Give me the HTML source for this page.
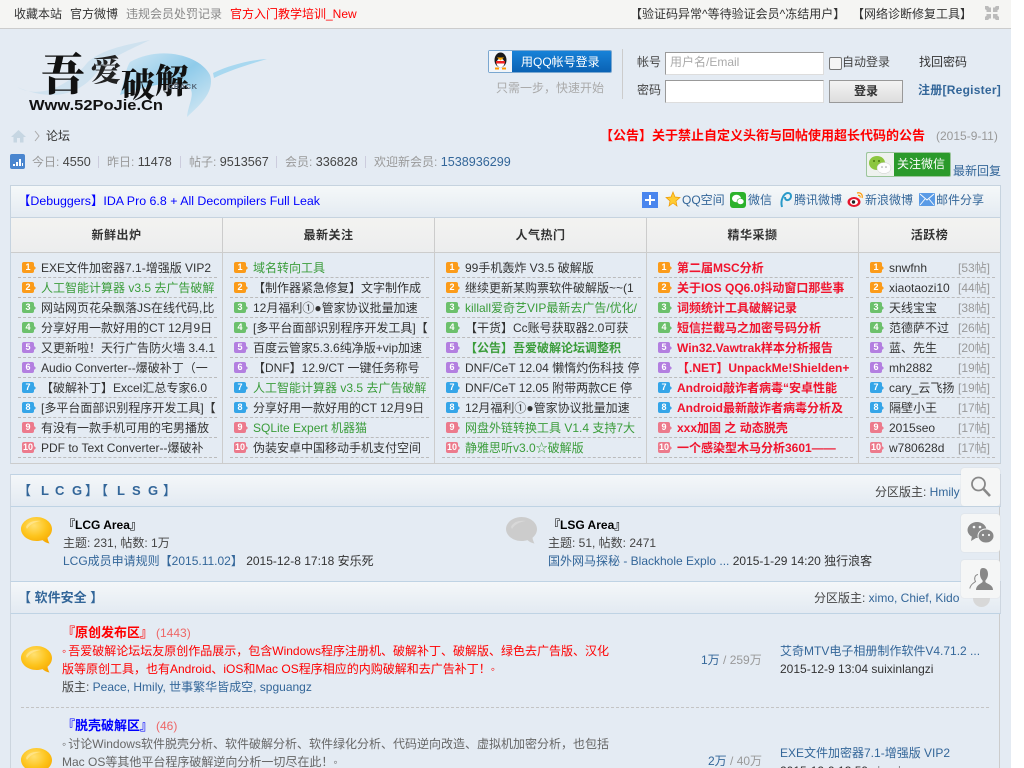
<!DOCTYPE html>
<html lang="zh"><head><meta charset="utf-8"><title>吾爱破解</title>
<style>
html,body{margin:0;padding:0;background:#fff}
#p{position:relative;width:1011px;height:768px;overflow:hidden;background:#e4ebf3;font:12px/18px "Liberation Sans","WenQuanYi Zen Hei","Noto Sans CJK SC",sans-serif;color:#444}
#w{position:absolute;left:0;top:0;width:1024px;height:768px;overflow:hidden;background:#fff}
.a,.t{position:absolute}
.t{white-space:nowrap;line-height:18px}
b{font-weight:bold}
.n{font-size:12.6px}
.l{color:#369}.g{color:#999}.r{color:#f00}.gr{color:#3a9c3a}.rd{color:#f0142d;font-weight:bold}.k{color:#333}
.hd{position:absolute;left:10px;width:989px;background:linear-gradient(#f4f7f9,#e3eaf2);border-top:1px solid #bfd3e4;border-bottom:1px solid #bfd3e4;border-left:1px solid #cdd6e0;border-right:1px solid #cdd6e0}
.ch{position:absolute;top:218px;height:34px;background:linear-gradient(#f3f3f1,#ecedee);text-align:center;font-weight:bold;line-height:34px;color:#333;letter-spacing:.5px}
.v{position:absolute;top:218px;width:1px;height:245px;background:#ccc}
.dot{position:absolute;height:0;border-top:1px dashed #bbb}
.ic{position:absolute;width:12px;height:11px;border-radius:2px;color:#fff;font:bold 9px/11px "Liberation Sans",sans-serif;text-align:center}
.ic:after{content:"";position:absolute;right:-2px;top:4px;border-left:2px solid;border-top:2px solid transparent;border-bottom:2px solid transparent;border-left-color:inherit}
.sh{color:#369;font-weight:bold;font-size:13px}
.o{letter-spacing:2px}
.fb{position:absolute;left:961px;width:39px;height:38px;background:#f5f6f6;border-radius:3px;box-shadow:0 0 1px #ccc}
</style></head><body>
<div id="w"><div id="p">

<!-- top bar -->
<div class="a" style="left:0;top:0;width:1011px;height:28px;background:#f5f5f3;border-bottom:1px solid #ccc"></div>
<span class="t" style="left:14px;top:5px;color:#333">收藏本站</span>
<span class="t" style="left:70px;top:5px;color:#333">官方微博</span>
<span class="t" style="left:126px;top:5px;color:#888">违规会员处罚记录</span>
<span class="t" style="left:230px;top:5px;color:#f00">官方入门教学培训_New</span>
<span class="t" style="left:630px;top:5px;color:#333">【验证码异常^等待验证会员^冻结用户】</span>
<span class="t" style="left:852px;top:5px;color:#333">【网络诊断修复工具】</span>
<svg class="a" style="left:984px;top:5px" width="16" height="16" viewBox="0 0 16 16"><g fill="#bbb"><path d="M1 1h3l2 2 1-1v5H2l1-1-2-2zM15 1h-3l-2 2-1-1v5h5l-1-1 2-2zM1 15h3l2-2 1 1V9H2l1 1-2 2zM15 15h-3l-2-2-1 1V9h5l-1 1 2 2z"/></g></svg>

<!-- logo -->
<svg class="a" style="left:0;top:0" width="280" height="125" viewBox="0 0 280 125">
<defs><linearGradient id="lg" x1="0" y1="0" x2="1" y2="1"><stop offset="0" stop-color="#d4e8f4"/><stop offset=".5" stop-color="#8fcbea"/><stop offset="1" stop-color="#dcebf4"/></linearGradient></defs>
<path d="M17 87C40 100 70 85 87 63 100 50 125 45 150 40 125 52 110 58 100 68 85 90 60 105 17 87z" fill="#cfe2ef"/>
<path d="M130 62C160 45 200 55 210 75 215 92 200 105 187 117 188 105 195 95 190 88 180 78 150 85 120 95 125 80 125 70 130 62z" fill="url(#lg)"/>
<path d="M213 73C230 65 250 60 267 59 250 64 230 70 214 78z" fill="#a8d8f0"/>
<text x="41" y="90" font-family="Noto Serif CJK SC,serif" font-weight="900" font-size="44" fill="#111">吾</text>
<text x="91" y="81" font-family="Noto Serif CJK SC,serif" font-weight="900" font-size="30" fill="#222">爱</text>
<text x="121" y="97" font-family="Noto Serif CJK SC,serif" font-weight="900" font-size="34" fill="#111">破</text>
<text x="155" y="93" font-family="Noto Serif CJK SC,serif" font-weight="900" font-size="34" fill="#111">解</text>
<text x="168" y="89" font-family="Liberation Sans,sans-serif" font-weight="bold" font-size="7.500" textLength="29" fill="#567">CRACK</text>
<text x="29" y="110" font-family="Liberation Sans,sans-serif" font-weight="bold" font-size="15" textLength="134" lengthAdjust="spacingAndGlyphs" fill="#111">Www.52PoJie.Cn</text>
</svg>

<!-- login -->
<div class="a" style="left:488px;top:50px;width:124px;height:23px;background:linear-gradient(#1782d8,#0a62b4);border:1px solid #7aa7d0;border-radius:2px;box-sizing:border-box"></div>
<div class="a" style="left:489px;top:51px;width:23px;height:21px;background:#f1f5f9"></div>
<svg class="a" style="left:492px;top:52px" width="17" height="18" viewBox="0 0 17 18"><ellipse cx="8.500" cy="8" rx="6" ry="7.500" fill="#1a1a1a"/><ellipse cx="8.500" cy="11" rx="4" ry="4.500" fill="#fff"/><path d="M4 9h9v2.500H4z" fill="#e22"/><path d="M5 5.500h7l-3.500 3z" fill="#fa0"/><path d="M3 15.500h4v2H3zM10 15.500h4v2h-4z" fill="#f90"/></svg>
<span class="t" style="left:521px;top:53px;color:#fff">用QQ帐号登录</span>
<span class="t" style="left:496px;top:79px;color:#aaa">只需一步，快速开始</span>
<div class="a" style="left:622px;top:49px;width:1px;height:50px;background:#ccc"></div>
<span class="t" style="left:637px;top:53px">帐号</span>
<span class="t" style="left:637px;top:81px">密码</span>
<div class="a" style="left:665px;top:52px;width:157px;height:21px;background:#fff;border:1px solid;border-color:#999 #ddd #ddd #999"></div>
<span class="t" style="left:670px;top:53px;color:#aaa">用户名/Email</span>
<div class="a" style="left:665px;top:80px;width:157px;height:21px;background:#fff;border:1px solid;border-color:#999 #ddd #ddd #999"></div>
<div class="a" style="left:829px;top:57px;width:11px;height:11px;background:#f5f5f5;border:1px solid #777;border-radius:2px"></div>
<span class="t" style="left:842px;top:53px">自动登录</span>
<span class="t" style="left:919px;top:53px;color:#333">找回密码</span>
<div class="a" style="left:829px;top:80px;width:72px;height:21px;background:linear-gradient(#f4f4f4,#ddd);border:1px solid #999;text-align:center;line-height:21px;font-weight:bold;color:#333">登录</div>
<span class="t" style="left:918px;top:81px;color:#369;font-weight:bold;letter-spacing:.25px">注册[Register]</span>

<!-- breadcrumb -->
<svg class="a" style="left:11px;top:129px" width="15" height="14" viewBox="0 0 15 14"><path d="M7.500 1L0 8h2.500v5.500h3.500V9h3v4.500h3.500V8H15z" fill="#c6d6e2"/></svg>
<svg class="a" style="left:34px;top:130px" width="6" height="12" viewBox="0 0 6 12"><path d="M1 1l4 5-4 5" fill="none" stroke="#aaa"/></svg>
<span class="t" style="left:46px;top:127px;color:#333">论坛</span>
<span class="t" style="left:600px;top:127px;color:#f00;font-weight:bold;font-size:13px">【公告】关于禁止自定义头衔与回帖使用超长代码的公告</span>
<span class="t" style="left:936px;top:127px;color:#999">(2015-9-11)</span>

<!-- stats -->
<svg class="a" style="left:10px;top:154px" width="15" height="15" viewBox="0 0 15 15"><rect width="15" height="15" rx="2" fill="#4a86cf"/><path d="M3 10h2v2H3zM6 8h2v4H6zM9 5h2v7H9zM12 9h1v3h-1z" fill="#fff"/></svg>
<span class="t" style="left:32px;top:153px"><span class="g">今日:</span> <span class="n">4550</span></span>
<span class="t" style="left:107px;top:153px"><span class="g">昨日:</span> <span class="n">11478</span></span>
<span class="t" style="left:189px;top:153px"><span class="g">帖子:</span> <span class="n">9513567</span></span>
<span class="t" style="left:285px;top:153px"><span class="g">会员:</span> <span class="n">336828</span></span>
<span class="t" style="left:374px;top:153px"><span class="g">欢迎新会员:</span> <span class="l n">1538936299</span></span>
<div class="a" style="left:98px;top:156px;width:1px;height:12px;background:#ccd"></div>
<div class="a" style="left:180px;top:156px;width:1px;height:12px;background:#ccd"></div>
<div class="a" style="left:276px;top:156px;width:1px;height:12px;background:#ccd"></div>
<div class="a" style="left:365px;top:156px;width:1px;height:12px;background:#ccd"></div>

<!-- wechat btn -->
<div class="a" style="left:866px;top:152px;width:83px;height:23px;background:#2b9a2b;border:1px solid #9cc59c;border-radius:2px;overflow:hidden"><div class="a" style="left:0;top:0;width:27px;height:23px;background:#eef2ee"></div>
<svg class="a" style="left:1px;top:2px" width="26" height="20" viewBox="0 0 26 20"><ellipse cx="9" cy="8" rx="8" ry="7" fill="#8cc63f"/><ellipse cx="16" cy="13" rx="7" ry="5.500" fill="#fdfdfd" stroke="#ccc" stroke-width=".5"/><circle cx="6" cy="6" r="1" fill="#4a7a10"/><circle cx="11" cy="6" r="1" fill="#4a7a10"/><circle cx="14" cy="12" r=".8" fill="#999"/><circle cx="18" cy="12" r=".8" fill="#999"/></svg></div>
<span class="t" style="left:897px;top:155px;color:#fff">关注微信</span>
<span class="t" style="left:953px;top:162px;color:#369">最新回复</span>

<!-- hot table -->
<div class="a" style="left:10px;top:185px;width:989px;height:277px;border:1px solid #c6d3df;border-bottom-color:#ccc"></div>
<div class="a" style="left:11px;top:186px;width:989px;height:31px;background:linear-gradient(#f5f8f9,#e4ebf2);border-bottom:1px solid #c6d3df"></div>
<span class="t" style="left:18px;top:192px;color:#00f;font-size:12.4px">【Debuggers】IDA Pro 6.8 + All Decompilers Full Leak</span>
<div class="ch" style="left:11px;width:211px">新鲜出炉</div>
<div class="ch" style="left:223px;width:211px">最新关注</div>
<div class="ch" style="left:435px;width:211px">人气热门</div>
<div class="ch" style="left:647px;width:211px">精华采撷</div>
<div class="ch" style="left:859px;width:141px">活跃榜</div>
<div class="a" style="left:11px;top:252px;width:989px;height:1px;background:#ccc"></div>
<div class="v" style="left:222px"></div><div class="v" style="left:434px"></div><div class="v" style="left:646px"></div><div class="v" style="left:858px"></div>

<!-- share -->
<div class="a" style="left:642px;top:192px;width:16px;height:16px;background:#4a86ee"></div>
<svg class="a" style="left:642px;top:192px" width="16" height="16" viewBox="0 0 16 16"><path d="M3 7h4V3h2v4h4v2H9v4H7V9H3z" fill="#fff"/></svg>
<svg class="a" style="left:665px;top:191px" width="16" height="16" viewBox="0 0 16 16"><path d="M8 1l2 5 5 .5-4 3.500 1 5-4-3-4 3 1-5-4-3.500 5-.5z" fill="#fc3" stroke="#e90" stroke-width=".7"/></svg>
<span class="t" style="left:682px;top:191px;color:#369">QQ空间</span>
<div class="a" style="left:730px;top:192px;width:16px;height:16px;background:#2bb22b;border-radius:3px"></div>
<svg class="a" style="left:730px;top:192px" width="16" height="16" viewBox="0 0 16 16"><ellipse cx="6.500" cy="6.500" rx="4.500" ry="3.700" fill="#fff"/><ellipse cx="10.500" cy="9.500" rx="3.500" ry="3" fill="#fff" stroke="#2bb22b" stroke-width=".6"/></svg>
<span class="t" style="left:748px;top:191px;color:#369">微信</span>
<svg class="a" style="left:779px;top:191px" width="14" height="18" viewBox="0 0 14 18"><path d="M3 16C1 9 5 2 9 2c4 0 4 6 0 7-2 .5-3-1-3-3" fill="none" stroke="#2a9ac9" stroke-width="2"/></svg>
<span class="t" style="left:794px;top:191px;color:#369">腾讯微博</span>
<svg class="a" style="left:847px;top:191px" width="17" height="17" viewBox="0 0 17 17"><ellipse cx="7" cy="11" rx="6.500" ry="5" fill="#e6162d"/><ellipse cx="7" cy="11" rx="4" ry="3" fill="#fff"/><circle cx="6.500" cy="11" r="1.700" fill="#222"/><path d="M10 2c4-1 6 2 5 5M11 4.500c2-.5 2.500 1 2 2" fill="none" stroke="#f90" stroke-width="1.200"/></svg>
<span class="t" style="left:865px;top:191px;color:#369">新浪微博</span>
<svg class="a" style="left:919px;top:193px" width="16" height="13" viewBox="0 0 16 13"><rect width="16" height="13" rx="1" fill="#5a9be6"/><path d="M1 1l7 6 7-6M1 12l5-6M15 12l-5-6" fill="none" stroke="#fff" stroke-width=".9"/></svg>
<span class="t" style="left:936px;top:191px;color:#369">邮件分享</span>

<!-- list rows -->
<div id="rows">
<div class="dot" style="left:18px;top:277px;width:199px"></div><div class="dot" style="left:230px;top:277px;width:199px"></div><div class="dot" style="left:442px;top:277px;width:199px"></div><div class="dot" style="left:654px;top:277px;width:199px"></div><div class="dot" style="left:866px;top:277px;width:129px"></div>
<div class="dot" style="left:18px;top:297px;width:199px"></div><div class="dot" style="left:230px;top:297px;width:199px"></div><div class="dot" style="left:442px;top:297px;width:199px"></div><div class="dot" style="left:654px;top:297px;width:199px"></div><div class="dot" style="left:866px;top:297px;width:129px"></div>
<div class="dot" style="left:18px;top:317px;width:199px"></div><div class="dot" style="left:230px;top:317px;width:199px"></div><div class="dot" style="left:442px;top:317px;width:199px"></div><div class="dot" style="left:654px;top:317px;width:199px"></div><div class="dot" style="left:866px;top:317px;width:129px"></div>
<div class="dot" style="left:18px;top:337px;width:199px"></div><div class="dot" style="left:230px;top:337px;width:199px"></div><div class="dot" style="left:442px;top:337px;width:199px"></div><div class="dot" style="left:654px;top:337px;width:199px"></div><div class="dot" style="left:866px;top:337px;width:129px"></div>
<div class="dot" style="left:18px;top:357px;width:199px"></div><div class="dot" style="left:230px;top:357px;width:199px"></div><div class="dot" style="left:442px;top:357px;width:199px"></div><div class="dot" style="left:654px;top:357px;width:199px"></div><div class="dot" style="left:866px;top:357px;width:129px"></div>
<div class="dot" style="left:18px;top:377px;width:199px"></div><div class="dot" style="left:230px;top:377px;width:199px"></div><div class="dot" style="left:442px;top:377px;width:199px"></div><div class="dot" style="left:654px;top:377px;width:199px"></div><div class="dot" style="left:866px;top:377px;width:129px"></div>
<div class="dot" style="left:18px;top:397px;width:199px"></div><div class="dot" style="left:230px;top:397px;width:199px"></div><div class="dot" style="left:442px;top:397px;width:199px"></div><div class="dot" style="left:654px;top:397px;width:199px"></div><div class="dot" style="left:866px;top:397px;width:129px"></div>
<div class="dot" style="left:18px;top:417px;width:199px"></div><div class="dot" style="left:230px;top:417px;width:199px"></div><div class="dot" style="left:442px;top:417px;width:199px"></div><div class="dot" style="left:654px;top:417px;width:199px"></div><div class="dot" style="left:866px;top:417px;width:129px"></div>
<div class="dot" style="left:18px;top:437px;width:199px"></div><div class="dot" style="left:230px;top:437px;width:199px"></div><div class="dot" style="left:442px;top:437px;width:199px"></div><div class="dot" style="left:654px;top:437px;width:199px"></div><div class="dot" style="left:866px;top:437px;width:129px"></div>
<div class="dot" style="left:18px;top:457px;width:199px"></div><div class="dot" style="left:230px;top:457px;width:199px"></div><div class="dot" style="left:442px;top:457px;width:199px"></div><div class="dot" style="left:654px;top:457px;width:199px"></div><div class="dot" style="left:866px;top:457px;width:129px"></div>
</div>

<!-- icons -->
<div class="ic" style="left:22px;top:262px;background:#fb9b1a;border-color:#fb9b1a">1</div><div class="ic" style="left:22px;top:282px;background:#fb9b1a;border-color:#fb9b1a">2</div><div class="ic" style="left:22px;top:302px;background:#6cc06c;border-color:#6cc06c">3</div><div class="ic" style="left:22px;top:322px;background:#6cc06c;border-color:#6cc06c">4</div><div class="ic" style="left:22px;top:342px;background:#b37fe0;border-color:#b37fe0">5</div><div class="ic" style="left:22px;top:362px;background:#b37fe0;border-color:#b37fe0">6</div><div class="ic" style="left:22px;top:382px;background:#35a5e8;border-color:#35a5e8">7</div><div class="ic" style="left:22px;top:402px;background:#35a5e8;border-color:#35a5e8">8</div><div class="ic" style="left:22px;top:422px;background:#ec7a8c;border-color:#ec7a8c">9</div><div class="ic" style="left:22px;top:442px;background:#ec7a8c;border-color:#ec7a8c">10</div>
<div class="ic" style="left:234px;top:262px;background:#fb9b1a;border-color:#fb9b1a">1</div><div class="ic" style="left:234px;top:282px;background:#fb9b1a;border-color:#fb9b1a">2</div><div class="ic" style="left:234px;top:302px;background:#6cc06c;border-color:#6cc06c">3</div><div class="ic" style="left:234px;top:322px;background:#6cc06c;border-color:#6cc06c">4</div><div class="ic" style="left:234px;top:342px;background:#b37fe0;border-color:#b37fe0">5</div><div class="ic" style="left:234px;top:362px;background:#b37fe0;border-color:#b37fe0">6</div><div class="ic" style="left:234px;top:382px;background:#35a5e8;border-color:#35a5e8">7</div><div class="ic" style="left:234px;top:402px;background:#35a5e8;border-color:#35a5e8">8</div><div class="ic" style="left:234px;top:422px;background:#ec7a8c;border-color:#ec7a8c">9</div><div class="ic" style="left:234px;top:442px;background:#ec7a8c;border-color:#ec7a8c">10</div>
<div class="ic" style="left:446px;top:262px;background:#fb9b1a;border-color:#fb9b1a">1</div><div class="ic" style="left:446px;top:282px;background:#fb9b1a;border-color:#fb9b1a">2</div><div class="ic" style="left:446px;top:302px;background:#6cc06c;border-color:#6cc06c">3</div><div class="ic" style="left:446px;top:322px;background:#6cc06c;border-color:#6cc06c">4</div><div class="ic" style="left:446px;top:342px;background:#b37fe0;border-color:#b37fe0">5</div><div class="ic" style="left:446px;top:362px;background:#b37fe0;border-color:#b37fe0">6</div><div class="ic" style="left:446px;top:382px;background:#35a5e8;border-color:#35a5e8">7</div><div class="ic" style="left:446px;top:402px;background:#35a5e8;border-color:#35a5e8">8</div><div class="ic" style="left:446px;top:422px;background:#ec7a8c;border-color:#ec7a8c">9</div><div class="ic" style="left:446px;top:442px;background:#ec7a8c;border-color:#ec7a8c">10</div>
<div class="ic" style="left:658px;top:262px;background:#fb9b1a;border-color:#fb9b1a">1</div><div class="ic" style="left:658px;top:282px;background:#fb9b1a;border-color:#fb9b1a">2</div><div class="ic" style="left:658px;top:302px;background:#6cc06c;border-color:#6cc06c">3</div><div class="ic" style="left:658px;top:322px;background:#6cc06c;border-color:#6cc06c">4</div><div class="ic" style="left:658px;top:342px;background:#b37fe0;border-color:#b37fe0">5</div><div class="ic" style="left:658px;top:362px;background:#b37fe0;border-color:#b37fe0">6</div><div class="ic" style="left:658px;top:382px;background:#35a5e8;border-color:#35a5e8">7</div><div class="ic" style="left:658px;top:402px;background:#35a5e8;border-color:#35a5e8">8</div><div class="ic" style="left:658px;top:422px;background:#ec7a8c;border-color:#ec7a8c">9</div><div class="ic" style="left:658px;top:442px;background:#ec7a8c;border-color:#ec7a8c">10</div>
<div class="ic" style="left:870px;top:262px;background:#fb9b1a;border-color:#fb9b1a">1</div><div class="ic" style="left:870px;top:282px;background:#fb9b1a;border-color:#fb9b1a">2</div><div class="ic" style="left:870px;top:302px;background:#6cc06c;border-color:#6cc06c">3</div><div class="ic" style="left:870px;top:322px;background:#6cc06c;border-color:#6cc06c">4</div><div class="ic" style="left:870px;top:342px;background:#b37fe0;border-color:#b37fe0">5</div><div class="ic" style="left:870px;top:362px;background:#b37fe0;border-color:#b37fe0">6</div><div class="ic" style="left:870px;top:382px;background:#35a5e8;border-color:#35a5e8">7</div><div class="ic" style="left:870px;top:402px;background:#35a5e8;border-color:#35a5e8">8</div><div class="ic" style="left:870px;top:422px;background:#ec7a8c;border-color:#ec7a8c">9</div><div class="ic" style="left:870px;top:442px;background:#ec7a8c;border-color:#ec7a8c">10</div>

<!-- col 1 -->
<span class="t k" style="left:41px;top:259px">EXE文件加密器7.1-增强版 VIP2</span>
<span class="t gr" style="left:41px;top:279px">人工智能计算器 v3.5 去广告破解</span>
<span class="t k" style="left:41px;top:299px">网站网页花朵飘落JS在线代码,比</span>
<span class="t k" style="left:41px;top:319px">分享好用一款好用的CT 12月9日</span>
<span class="t k" style="left:41px;top:339px">又更新啦！天行广告防火墙 3.4.1</span>
<span class="t k" style="left:41px;top:359px">Audio Converter--爆破补丁（一</span>
<span class="t k" style="left:41px;top:379px">【破解补丁】Excel汇总专家6.0</span>
<span class="t k" style="left:41px;top:399px">[多平台面部识别程序开发工具]【</span>
<span class="t k" style="left:41px;top:419px">有没有一款手机可用的宅男播放</span>
<span class="t k" style="left:41px;top:439px">PDF to Text Converter--爆破补</span>
<!-- col 2 -->
<span class="t gr" style="left:253px;top:259px">域名转向工具</span>
<span class="t k" style="left:253px;top:279px">【制作器紧急修复】文字制作成</span>
<span class="t k" style="left:253px;top:299px">12月福利①●管家协议批量加速</span>
<span class="t k" style="left:253px;top:319px">[多平台面部识别程序开发工具]【</span>
<span class="t k" style="left:253px;top:339px">百度云管家5.3.6纯净版+vip加速</span>
<span class="t k" style="left:253px;top:359px">【DNF】12.9/CT 一键任务称号</span>
<span class="t gr" style="left:253px;top:379px">人工智能计算器 v3.5 去广告破解</span>
<span class="t k" style="left:253px;top:399px">分享好用一款好用的CT 12月9日</span>
<span class="t gr" style="left:253px;top:419px">SQLite Expert 机器猫</span>
<span class="t k" style="left:253px;top:439px">伪装安卓中国移动手机支付空间</span>
<!-- col 3 -->
<span class="t k" style="left:465px;top:259px">99手机轰炸 V3.5 破解版</span>
<span class="t k" style="left:465px;top:279px">继续更新某购票软件破解版~~(1</span>
<span class="t gr" style="left:465px;top:299px">killall爱奇艺VIP最新去广告/优化/</span>
<span class="t k" style="left:465px;top:319px">【干货】Cc账号获取器2.0可获</span>
<span class="t gr" style="left:465px;top:339px;font-weight:bold">【公告】吾爱破解论坛调整积</span>
<span class="t k" style="left:465px;top:359px">DNF/CeT 12.04 懒惰灼伤科技 停</span>
<span class="t k" style="left:465px;top:379px">DNF/CeT 12.05 附带两款CE 停</span>
<span class="t k" style="left:465px;top:399px">12月福利①●管家协议批量加速</span>
<span class="t gr" style="left:465px;top:419px">网盘外链转换工具 V1.4 支持7大</span>
<span class="t gr" style="left:465px;top:439px">静雅思听v3.0☆破解版</span>
<!-- col 4 -->
<span class="t rd" style="left:677px;top:259px">第二届MSC分析</span>
<span class="t rd" style="left:677px;top:279px">关于IOS QQ6.0抖动窗口那些事</span>
<span class="t rd" style="left:677px;top:299px">词频统计工具破解记录</span>
<span class="t rd" style="left:677px;top:319px">短信拦截马之加密号码分析</span>
<span class="t rd" style="left:677px;top:339px">Win32.Vawtrak样本分析报告</span>
<span class="t rd" style="left:677px;top:359px">【.NET】UnpackMe!Shielden+</span>
<span class="t rd" style="left:677px;top:379px">Android敲诈者病毒“安卓性能</span>
<span class="t rd" style="left:677px;top:399px">Android最新敲诈者病毒分析及</span>
<span class="t rd" style="left:677px;top:419px">xxx加固 之 动态脱壳</span>
<span class="t rd" style="left:677px;top:439px">一个感染型木马分析3601——</span>
<!-- col 5 -->
<span class="t k" style="left:889px;top:259px">snwfnh</span><span class="t g" style="left:958px;top:259px">[53帖]</span>
<span class="t k" style="left:889px;top:279px">xiaotaozi10</span><span class="t g" style="left:958px;top:279px">[44帖]</span>
<span class="t k" style="left:889px;top:299px">天线宝宝</span><span class="t g" style="left:958px;top:299px">[38帖]</span>
<span class="t k" style="left:889px;top:319px">范德萨不过</span><span class="t g" style="left:958px;top:319px">[26帖]</span>
<span class="t k" style="left:889px;top:339px">蓝、先生</span><span class="t g" style="left:958px;top:339px">[20帖]</span>
<span class="t k" style="left:889px;top:359px">mh2882</span><span class="t g" style="left:958px;top:359px">[19帖]</span>
<span class="t k" style="left:889px;top:379px">cary_云飞扬</span><span class="t g" style="left:958px;top:379px">[19帖]</span>
<span class="t k" style="left:889px;top:399px">隔壁小王</span><span class="t g" style="left:958px;top:399px">[17帖]</span>
<span class="t k" style="left:889px;top:419px">2015seo</span><span class="t g" style="left:958px;top:419px">[17帖]</span>
<span class="t k" style="left:889px;top:439px">w780628d</span><span class="t g" style="left:958px;top:439px">[17帖]</span>

<!-- LCG section -->
<div class="a" style="left:10px;top:474px;width:990px;height:294px;border-left:1px solid #ccd5de;border-right:1px solid #ccc;box-sizing:border-box"></div>
<div class="hd" style="top:474px;height:31px"></div>
<span class="t sh" style="left:18px;top:482px">【</span><span class="t sh" style="left:41px;top:482px">L</span><span class="t sh" style="left:55px;top:482px">C</span><span class="t sh" style="left:72px;top:482px">G</span><span class="t sh" style="left:85px;top:482px">】</span><span class="t sh" style="left:95px;top:482px">【</span><span class="t sh" style="left:117px;top:482px">L</span><span class="t sh" style="left:132px;top:482px">S</span><span class="t sh" style="left:148px;top:482px">G</span><span class="t sh" style="left:163px;top:482px">】</span>
<span class="t" style="left:875px;top:483px">分区版主: <span class="l">Hmily</span></span>

<svg class="a" style="left:21px;top:517px" width="32" height="29" viewBox="0 0 32 29"><defs><radialGradient id="b" cx=".42" cy=".32" r=".75"><stop offset="0" stop-color="#ffe070"/><stop offset=".55" stop-color="#fdc41c"/><stop offset="1" stop-color="#f6a700"/></radialGradient></defs><path d="M15.500 0C24 0 31 5.500 31 12c0 3.500-1.700 6.500-4.500 8.700.2 2.200 1.200 4.300 2 5.800-3-.5-5.300-1.800-7-3.400-1.800.6-3.800.9-6 .9C7 24 0 18.500 0 12S7 0 15.500 0z" fill="url(#b)"/><path d="M5 10C7 5 13 3 20 4 14 5 9 7 6 12z" fill="#ffe89a" opacity=".7"/></svg>
<svg class="a" style="left:506px;top:517px" width="32" height="29" viewBox="0 0 32 29"><path d="M15.500 0C24 0 31 5.500 31 12c0 3.500-1.700 6.500-4.500 8.700.2 2.200 1.200 4.300 2 5.800-3-.5-5.300-1.800-7-3.400-1.800.6-3.800.9-6 .9C7 24 0 18.500 0 12S7 0 15.500 0z" fill="#ccc"/><path d="M5 10C7 5 13 3 20 4 14 5 9 7 6 12z" fill="#ddd" opacity=".7"/></svg>
<span class="t" style="left:63px;top:516px;color:#000;font-weight:bold">『LCG Area』</span>
<span class="t" style="left:63px;top:534px">主题: 231, 帖数: 1万</span>
<span class="t" style="left:63px;top:552px"><span class="l">LCG成员申请规则【2015.11.02】</span> <span class="k">2015-12-8 17:18 安乐死</span></span>
<span class="t" style="left:548px;top:516px;color:#000;font-weight:bold">『LSG Area』</span>
<span class="t" style="left:548px;top:534px">主题: 51, 帖数: 2471</span>
<span class="t" style="left:548px;top:552px"><span class="l">国外网马探秘 - Blackhole Explo ...</span> <span class="k">2015-1-29 14:20 独行浪客</span></span>

<div class="hd" style="top:581px;height:31px"></div>
<span class="t sh" style="left:18px;top:589px">【 软件安全 】</span>
<span class="t" style="left:814px;top:589px">分区版主: <span class="l">ximo, Chief, Kido</span></span>

<svg class="a" style="left:21px;top:646px" width="32" height="29" viewBox="0 0 32 29"><path d="M15.500 0C24 0 31 5.500 31 12c0 3.500-1.700 6.500-4.500 8.700.2 2.200 1.200 4.300 2 5.800-3-.5-5.300-1.800-7-3.400-1.800.6-3.800.9-6 .9C7 24 0 18.500 0 12S7 0 15.500 0z" fill="url(#b)"/><path d="M5 10C7 5 13 3 20 4 14 5 9 7 6 12z" fill="#ffe89a" opacity=".7"/></svg>
<span class="t" style="left:62px;top:624px;color:#f00;font-weight:bold;font-size:13px">『原创发布区』</span>
<span class="t" style="left:156px;top:624px;color:#e66">(1443)</span>
<span class="t" style="left:62px;top:642px;color:#f00"><span class="o">◦</span>吾爱破解论坛坛友原创作品展示，包含Windows程序注册机、破解补丁、破解版、绿色去广告版、汉化</span>
<span class="t" style="left:62px;top:660px;color:#f00">版等原创工具，也有Android、iOS和Mac OS程序相应的内购破解和去广告补丁！◦</span>
<span class="t" style="left:62px;top:678px">版主: <span class="l">Peace, Hmily, 世事繁华皆成空, spguangz</span></span>
<span class="t" style="left:701px;top:651px"><span class="l">1万</span> <span class="g">/ 259万</span></span>
<span class="t l" style="left:780px;top:642px">艾奇MTV电子相册制作软件V4.71.2 ...</span>
<span class="t k" style="left:780px;top:660px">2015-12-9 13:04 suixinlangzi</span>
<div class="a" style="left:21px;top:707px;width:968px;height:0;border-top:1px dashed #c4c4c4"></div>

<svg class="a" style="left:21px;top:748px" width="32" height="29" viewBox="0 0 32 29"><path d="M15.500 0C24 0 31 5.500 31 12c0 3.500-1.700 6.500-4.500 8.700.2 2.200 1.200 4.300 2 5.800-3-.5-5.300-1.800-7-3.400-1.800.6-3.800.9-6 .9C7 24 0 18.500 0 12S7 0 15.500 0z" fill="url(#b)"/><path d="M5 10C7 5 13 3 20 4 14 5 9 7 6 12z" fill="#ffe89a" opacity=".7"/></svg>
<span class="t" style="left:62px;top:717px;color:#00f;font-weight:bold;font-size:13px">『脱壳破解区』</span>
<span class="t" style="left:156px;top:717px;color:#e66">(46)</span>
<span class="t" style="left:62px;top:735px;color:#666"><span class="o">◦</span>讨论Windows软件脱壳分析、软件破解分析、软件绿化分析、代码逆向改造、虚拟机加密分析，也包括</span>
<span class="t" style="left:62px;top:753px;color:#666">Mac OS等其他平台程序破解逆向分析一切尽在此！◦</span>
<span class="t" style="left:708px;top:752px"><span class="l">2万</span> <span class="g">/ 40万</span></span>
<span class="t l" style="left:780px;top:744px">EXE文件加密器7.1-增强版 VIP2</span>
<span class="t k" style="left:780px;top:762px">2015-12-9 13:59 sjyyxj</span>

<!-- floating buttons -->
<div class="a" style="left:973px;top:590px;width:17px;height:17px;border-radius:50%;background:#d8d8d8"></div>
<div class="fb" style="top:468px"><svg class="a" style="left:8px;top:7px" width="24" height="24" viewBox="0 0 24 24"><circle cx="9.500" cy="9" r="6.500" fill="none" stroke="#888" stroke-width="1.800"/><path d="M14.500 14l6.500 7" stroke="#888" stroke-width="2.600"/></svg></div>
<div class="fb" style="top:514px"><svg class="a" style="left:6px;top:7px" width="28" height="24" viewBox="0 0 28 24"><ellipse cx="10" cy="9" rx="9.500" ry="8" fill="#888"/><path d="M5 15l-1 5 5-3z" fill="#888"/><ellipse cx="19" cy="15" rx="8" ry="7" fill="#888" stroke="#f5f6f6"/><circle cx="7" cy="6" r="1.300" fill="#f5f6f6"/><circle cx="13" cy="6" r="1.300" fill="#f5f6f6"/><circle cx="16" cy="14" r="1.100" fill="#f5f6f6"/><circle cx="22" cy="14" r="1.100" fill="#f5f6f6"/></svg></div>
<div class="fb" style="top:560px"><svg class="a" style="left:8px;top:8px" width="24" height="23" viewBox="0 0 24 23"><path d="M14 0c3.500 0 5 2.800 5 6 0 2.800-1.200 5-2.600 6.500V14c1.500 2 7.600 2.500 7.600 8H7c0-5 5-6.200 6.600-8v-1.500C12.200 11 11 8.800 11 6c0-3.200 0-6 3-6z" fill="#888"/><path d="M9 6.500C5.500 7 5 11 6.500 13.500 5 15 1.500 16 .8 20.500" fill="none" stroke="#888" stroke-width="1"/></svg></div>

</div></div>
</body></html>
